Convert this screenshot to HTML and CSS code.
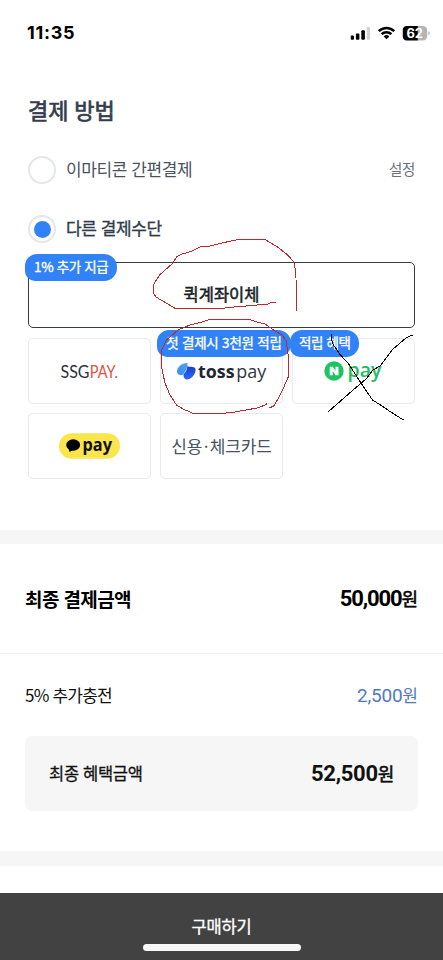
FILE: index.html
```html
<!DOCTYPE html>
<html lang="ko">
<head>
<meta charset="utf-8">
<meta name="viewport" content="width=device-width, initial-scale=1">
<title>결제 방법</title>
<link rel="stylesheet" href="styles.css">
</head>
<body>
<div class="screen">
  <header class="status">
    <span class="time">11:35</span>
    <div class="status-icons">
      <svg class="signal" width="20" height="13" viewBox="0 0 20 13"><rect x="0" y="8.6" width="3.5" height="4.1" rx="1"/><rect x="5.4" y="6.4" width="3.5" height="6.3" rx="1"/><rect x="10.8" y="3.2" width="3.6" height="9.5" rx="1"/><rect class="dim" x="16.2" y="0" width="3.5" height="12.7" rx="1"/></svg>
      <svg class="wifi" width="18" height="14" viewBox="0 0 18 14"><path d="M1.3 5.1a11 11 0 0 1 15.4 0M4.1 8.2a7 7 0 0 1 9.8 0"/><path class="dot" d="M6.2 10.4a4.1 4.1 0 0 1 5.6 0L9 13.3z"/></svg>
      <svg class="battery" width="28" height="15" viewBox="0 0 28 15"><path class="empty" d="M15 0h5.5a4.2 4.2 0 0 1 4.2 4.2v6.1a4.2 4.2 0 0 1-4.2 4.2H15zM25.8 5.3q1.5.5 1.5 2t-1.5 2z"/><path d="M4.2 0H15.300v14.500H4.200A4.200 4.200 0 0 1 0 10.300V4.200A4.200 4.200 0 0 1 4.200 0z"/><text x="4" y="11.600" textLength="16.500" lengthAdjust="spacingAndGlyphs">62</text></svg>
    </div>
  </header>

  <main>
    <section class="methods">
      <h1>결제 방법</h1>
      <div class="option"><i class="radio"></i><span class="name">이마티콘 간편결제</span><span class="setting">설정</span></div>
      <div class="option chosen"><i class="radio on"></i><span class="name">다른 결제수단</span></div>
      <div class="cards">
        <div class="card primary"><span class="badge">1% 추가 지급</span><span class="quick">퀵계좌이체</span></div>
        <div class="card">
          <svg width="64" height="26" viewBox="-3 -3 64 26"><text class="ssg" x="0.500" y="16.500" textLength="29" lengthAdjust="spacingAndGlyphs">SSG</text><text class="ssg red" x="29.800" y="16.500" textLength="28" lengthAdjust="spacingAndGlyphs">PAY.</text></svg>
        </div>
        <div class="card"><span class="badge toss-badge">첫 결제시 3천원 적립</span>
          <svg class="toss" width="94" height="30" viewBox="-3 -3 94 30">
            <defs><linearGradient id="g" x1="0" x2="1" y1="1" y2="0"><stop offset="0" stop-color="#2f8df5"/><stop offset="1" stop-color="#56a2f4"/></linearGradient><linearGradient id="h" x1="0" x2="0" y1="0" y2="1"><stop offset="0" stop-color="#1741ce"/><stop offset="1" stop-color="#2867f5"/></linearGradient></defs>
            <path fill="url(#g)" d="M10.600 4C10.900 8 9 12 6 15.600 3 17 0 15.500 0 12.600 0 8 5 3.600 10.600 4z"/>
            <path fill="url(#h)" d="M10.300 7.300C13 8.400 18.800 7 18.600 10.800 18.400 16 14 20.800 9.300 20.600 7 20 6.400 17.500 6.400 15.300 9 13 10.300 10.500 10.300 7.300z"/>
            <text class="toss-word" x="21" y="18.500" textLength="36.500" lengthAdjust="spacingAndGlyphs">toss</text>
            <text class="toss-pay" x="59.300" y="18.500" textLength="30" lengthAdjust="spacingAndGlyphs">pay</text>
          </svg>
        </div>
        <div class="card"><span class="badge n-badge">적립 혜택</span>
          <svg width="64" height="30" viewBox="-2 -3 64 30"><circle cx="10" cy="12" r="9.700" fill="#1ec463"/><path fill="#fff" d="M5.700 7.700h3.100l2.700 4.300V7.700h3v8.600h-3l-2.800-4.300v4.300h-3z"/><text class="n-pay" x="23.500" y="18" textLength="34" lengthAdjust="spacingAndGlyphs">pay</text></svg>
        </div>
        <div class="card">
          <svg width="61" height="32" viewBox="0 -3 61 32"><rect width="61" height="25.500" y=".2" rx="12.700" fill="#fae64c"/><ellipse cx="14.200" cy="12" rx="7" ry="5.800"/><path d="M9.500 15l1 4 4.500-2.500z"/><text class="kakao" x="23.500" y="17.600" textLength="29.500" lengthAdjust="spacingAndGlyphs">pay</text></svg>
        </div>
        <div class="card credit">신용<i class="mid">·</i>체크카드</div>
      </div>
    </section>

    <section class="total"><span class="total-name">최종 결제금액</span><strong><b class="tight">50,000</b>원</strong></section>
    <section class="extra">
      <div class="row"><span class="extra-name">5% 추가충전</span><span class="plus"><b>2,500</b>원</span></div>
      <div class="benefit"><span>최종 혜택금액</span><strong><b>52,500</b>원</strong></div>
    </section>
    <div class="divider"></div>
  </main>

  <footer><span>구매하기</span><i class="home"></i></footer>

  <svg class="marks" width="443" height="960" viewBox="0 0 443 960">
    <path class="pen-red" d="M275.500 302.500H271L268 304 254 305.300 232 307.200 222 308.300H175L156 297 153.500 293V284.500L159.500 275 173 263 176.500 257 182 254 191 251.500 201 246.500 210 246 222 243 237 239.700H265.500L277 246.700 287 254.300 293 261 294.700 265 296 278 296.500 311.500"/>
    <path class="pen-red" d="M266.700 402.700V404.500L257 408 235 412 222 413.500H193.500L183 409 176.500 405 170 395 165 383 161.500 367V350L166.500 340 178 330 190 325 200 322.500 210 319.500H250L256 321.700 265 324 273.500 330 282 335 286 340 287.500 350 288.700 360V376L286 382 283.500 388 278.500 398 273.500 406.500 269.500 407.500"/>
    <path class="pen-black" d="M331.500 334V339L332.500 343.500 340 354.500 348 363 361 383 372.500 400 382 406 390 411.500 403.500 420M412.500 335L406.500 337.500 392.500 349.500 380.500 365.500 372.500 370.500 366.500 378.500 348.500 394 328.500 411.500"/>
  </svg>
</div>
</body>
</html>
```
FILE: styles.css
```css
* { box-sizing: border-box; }
body { margin: 0; background: #fff; font-family: "Noto Sans CJK KR", sans-serif; }
.screen { position: relative; width: 443px; height: 960px; overflow: hidden; display: flex; flex-direction: column; }
i { font-style: normal; }

.status { height: 66px; padding: 0 15px 0 27px; display: flex; align-items: center; justify-content: space-between; }
.time { font: 700 18px/20px Inter, sans-serif; letter-spacing: .7px; color: #000; }
.status-icons { display: flex; align-items: center; gap: 7px; transform: translateX(2.500px); }
.signal .dim { fill: #d2d2d2; }
.wifi path { fill: none; stroke: #000; stroke-width: 2.5; }
.wifi .dot { fill: #000; stroke: none; }
.battery .empty { fill: #b5b5b5; }
.battery text { font: 700 12.500px Inter, sans-serif; fill: #fff; }

main { flex: 1; }
.methods { height: 478px; padding: 25px 28px 0; border-bottom: 14.500px solid #f6f6f6; }
h1 { margin: 0; font-size: 22px; line-height: 36px; font-weight: 400; letter-spacing: -.1px; -webkit-text-stroke: .7px #343d4b; color: #343d4b; }
.option { height: 28px; margin-top: 28.500px; display: flex; align-items: center; gap: 10px; color: #4a525e; font-size: 17px; letter-spacing: -.4px; }
.option span { line-height: 24px; }
.chosen { margin-top: 31.500px; color: #333b48; -webkit-text-stroke: .35px #333b48; }
.radio { width: 28px; height: 28px; border: 2px solid #e4e7eb; border-radius: 50%; display: grid; place-items: center; }
.on::after { content: ""; width: 17px; height: 17px; border-radius: 50%; background: #3182f6; }
.option .name, .option .setting { margin-top: -1.500px; }
.option .setting { margin-left: auto; font-size: 14.500px; color: #687280; }
.cards { margin-top: 19px; display: grid; grid-template-columns: repeat(3, 1fr); grid-auto-rows: 66px; gap: 9.600px; }
.card { position: relative; border: 1.500px solid #e8e9ec; border-radius: 5px; display: flex; align-items: center; justify-content: center; color: #49515d; }
.primary { grid-column: 1 / -1; border-color: #353a43; color: #191f28; }
.quick { margin-top: -2px; font-size: 16.500px; -webkit-text-stroke: .55px #191f28; }
.badge { position: absolute; left: -4px; top: -9px; height: 27px; padding: 0 9px; line-height: 24px; border-radius: 12px 13px 13px 10px; background: #3182f6; color: #fff; font-size: 13.500px; letter-spacing: -.35px; -webkit-text-stroke: .35px #fff; white-space: nowrap; z-index: 1; }
.toss-badge { padding: 0 9px; letter-spacing: -.22px; }
.n-badge { left: -3px; padding: 0 8.500px; }
.credit { padding-bottom: 2px; font-size: 17px; letter-spacing: -.15px; }
.mid { padding: 0 1.500px; }
.ssg { font: 400 17px Lato, sans-serif; fill: #2b3040; }
.ssg.red { fill: #dc5142; }
.toss-word { font: 700 18px "Open Sans", sans-serif; fill: #202632; }
.toss-pay { font: 400 18px "Open Sans", sans-serif; fill: #303640; }
.n-pay { font: 600 19px "Open Sans", sans-serif; fill: #1ebd62; }
.kakao { font: 700 18px "Noto Sans", sans-serif; fill: #111; }

.total { height: 110px; padding: 0 25px 1px; border-bottom: 1.500px solid #f1f1f1; display: flex; align-items: center; justify-content: space-between; color: #000; }
.total-name { font-size: 19px; font-weight: 700; letter-spacing: -.6px; }
strong { font-size: 18px; font-weight: 400; -webkit-text-stroke: .5px #000; }
b { font-family: Roboto, sans-serif; font-size: 22px; font-weight: 700; letter-spacing: -.3px; -webkit-text-stroke: 0; }
b.tight { letter-spacing: -1.150px; }
.extra { padding: 0 25px; color: #111; }
.row { height: 82px; padding-bottom: 1px; display: flex; align-items: center; justify-content: space-between; font-size: 17px; letter-spacing: -.8px; }
.plus { color: #5079c4; font-size: 17px; letter-spacing: 0; }
.row .plus b { font-size: 19px; font-weight: 400; letter-spacing: -.2px; }
.benefit { height: 75px; padding: 0 24px 2px; background: #f6f6f6; border-radius: 7px; display: flex; align-items: center; justify-content: space-between; font-size: 16.500px; letter-spacing: -.3px; -webkit-text-stroke: .3px #111; color: #111; }
.divider { height: 14.500px; margin-top: 40px; background: #f6f6f6; }
footer { height: 67px; background: #424242; color: #fff; display: flex; flex-direction: column; align-items: center; font-size: 16.500px; letter-spacing: -.2px; -webkit-text-stroke: .35px #fff; }
footer span { margin-top: 21px; line-height: 24px; }
.home { width: 158px; height: 6.500px; margin-top: 6px; border-radius: 4px; background: #f8f8f8; }
.marks { position: absolute; inset: 0; z-index: 2; pointer-events: none; }
.marks path { fill: none; stroke-width: 1; shape-rendering: crispEdges; }
.marks .pen-red { stroke: #c1272d; }
.marks .pen-black { stroke: #000; }
```
